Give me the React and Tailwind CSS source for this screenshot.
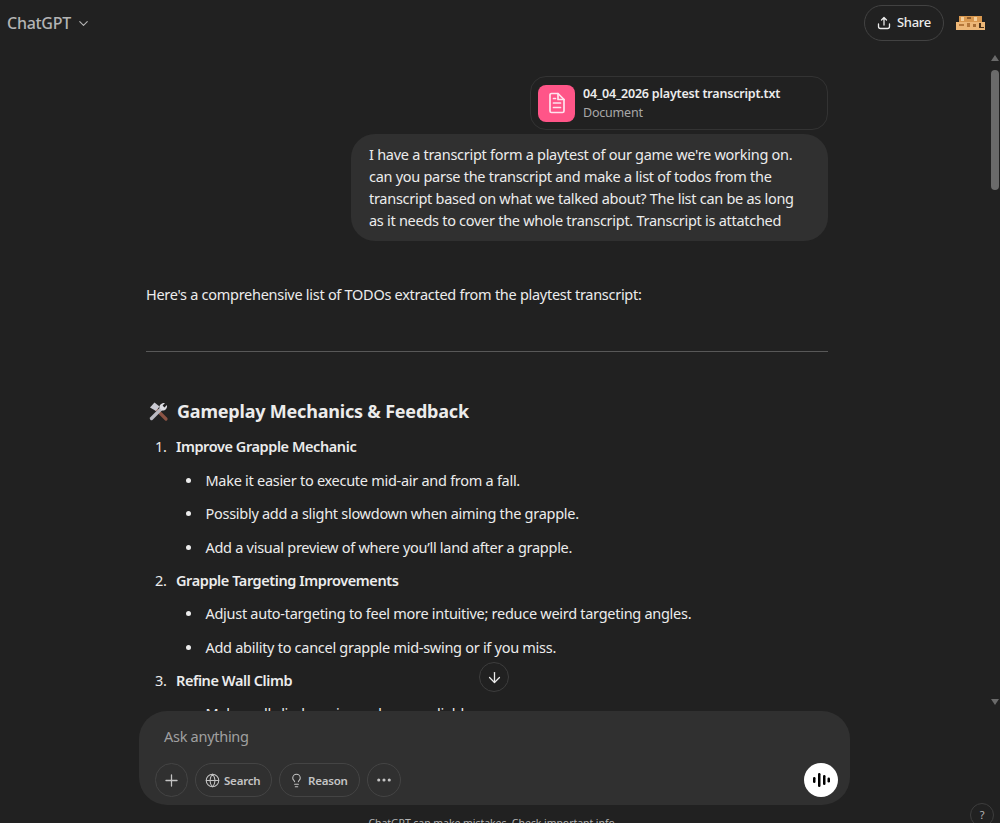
import React from 'react';
import { ChevronDown, Plus, Globe, Lightbulb, Ellipsis, ArrowDown } from 'lucide-react';

const sections = [
  {
    n: '1.',
    title: 'Improve Grapple Mechanic',
    items: [
      'Make it easier to execute mid-air and from a fall.',
      'Possibly add a slight slowdown when aiming the grapple.',
      'Add a visual preview of where you’ll land after a grapple.',
    ],
  },
  {
    n: '2.',
    title: 'Grapple Targeting Improvements',
    items: [
      'Adjust auto-targeting to feel more intuitive; reduce weird targeting angles.',
      'Add ability to cancel grapple mid-swing or if you miss.',
    ],
  },
  {
    n: '3.',
    title: 'Refine Wall Climb',
    items: ['Make wall climb easier and more reliable.'],
  },
];

function ToolsEmoji() {
  return (
    <svg width="21" height="21" viewBox="0 0 21 21" className="shrink-0 ml-[2px]">
      {/* hammer */}
      <path d="M8 8 L18 18" stroke="#8b5344" strokeWidth="3.2" strokeLinecap="round" />
      <path d="M2 6.5 L6.5 1.5 L11.5 5.5 L8 10 Z" fill="#c9c9d1" />
      {/* wrench */}
      <path d="M3.5 17.5 L13 8" stroke="#b9b9c1" strokeWidth="3.4" strokeLinecap="round" />
      <path d="M11.5 7 C11 4 13.5 1.5 17 2 L14.6 4.6 L16.4 6.4 L19 4 C19.5 7.5 17 10 14 9.5 Z" fill="#dcdce2" />
    </svg>
  );
}

function Avatar() {
  return (
    <svg width="29" height="14" viewBox="0 0 29 14">
      <rect x="3" y="0" width="23" height="6" fill="#d9984f" />
      <rect x="0" y="6" width="29" height="8" fill="#edb777" />
      <rect x="5" y="1" width="3" height="4" fill="#f4cf9c" />
      <rect x="11" y="1" width="4" height="2" fill="#8f5d2d" />
      <rect x="18" y="1" width="3" height="4" fill="#f4cf9c" />
      <rect x="3" y="8" width="5" height="2" fill="#b5773a" />
      <rect x="11" y="7" width="3" height="4" fill="#b5773a" />
      <rect x="17" y="8" width="3" height="3" fill="#a66c34" />
      <rect x="23" y="7" width="2" height="4" fill="#4a3118" />
      <rect x="23" y="11" width="5" height="1" fill="#4a3118" />
    </svg>
  );
}

function Pill({ icon: Icon, label, width }) {
  return (
    <div className={`h-[34px] ${width} pl-[9px] flex items-center gap-[4px] rounded-full border border-[#444444] text-[#c4c4c4] text-[11.5px] font-semibold tracking-[-0.2px]`}>
      <Icon size={15} strokeWidth={1.7} />
      <span className="mt-px">{label}</span>
    </div>
  );
}

export default function App() {
  return (
    <div className="relative w-[1000px] h-[823px] overflow-hidden bg-[#212121] text-[#ececec] text-[14.5px] tracking-[-0.28px] font-['Noto_Sans','Open_Sans',sans-serif]">
      <header className="h-[46px] flex items-center justify-between pl-[7px] pr-[15px]">
        <div className="flex items-center gap-[5px] text-[#b4b4b4] text-[16px] font-medium">
          ChatGPT
          <ChevronDown size={15} strokeWidth={1.8} />
        </div>
        <div className="flex items-center gap-3">
          <div className="h-9 w-[80px] rounded-full border border-[#424242] flex items-center justify-center gap-[6px] text-[13px] font-medium">
            <svg width="14" height="14" viewBox="0 0 14 14" fill="none" stroke="currentColor" strokeWidth="1.3" strokeLinecap="round" strokeLinejoin="round">
              <path d="M7 9V1.5M4.5 4L7 1.5 9.5 4" />
              <path d="M1.5 8v2.5a2 2 0 0 0 2 2h7a2 2 0 0 0 2-2V8" />
            </svg>
            Share
          </div>
          <Avatar />
        </div>
      </header>

      <main className="w-[682px] ml-[146px] pt-[30px]">
        <div className="flex flex-col items-end">
          <div className="w-[298px] h-[54px] rounded-2xl border border-[#333333] flex items-center gap-[8px] pl-[7px]">
            <div className="w-[37px] h-[37px] rounded-lg bg-[#ff5588] flex items-center justify-center">
              <svg width="20" height="22" viewBox="0 0 20 22" fill="none" stroke="#ffe4ee" strokeWidth="1.7" strokeLinejoin="round" strokeLinecap="round">
                <path d="M3 3a1.5 1.5 0 0 1 1.5-1.5H11L17 7.5V19a1.5 1.5 0 0 1-1.5 1.5h-11A1.5 1.5 0 0 1 3 19Z" />
                <path d="M11 1.5V7.5H17" />
                <path d="M6.5 6.5H8.5M6.5 11H13.5M6.5 15.5H13.5" />
              </svg>
            </div>
            <div className="leading-[19px] text-[12.5px] tracking-[-0.2px]">
              <div className="font-semibold">04_04_2026 playtest transcript.txt</div>
              <div className="text-[#a8a8a8]">Document</div>
            </div>
          </div>
          <div className="w-[477px] mt-1 rounded-3xl bg-[#303030] px-[18px] pt-[9px] pb-[10px] leading-[22px]">
            I have a transcript form a playtest of our game we're working on. can you parse the transcript and make a list of todos from the transcript based on what we talked about? The list can be as long as it needs to cover the whole transcript. Transcript is attatched
          </div>
        </div>

        <p className="mt-[42px] leading-[22px]">Here's a comprehensive list of TODOs extracted from the playtest transcript:</p>
        <hr className="mt-[46px] border-[#585858]" />

        <h3 className="mt-[46px] flex items-center gap-2 text-[18px] font-bold tracking-[-0.2px] leading-[27px]">
          <ToolsEmoji />
          Gameplay Mechanics &amp; Feedback
        </h3>

        {sections.map((s, i) => (
          <div key={s.n}>
            <div className={`flex leading-[22px] ${i === 0 ? 'mt-[10px]' : 'mt-[11px]'}`}>
              <span className="w-[30px] pl-[9px] shrink-0">{s.n}</span>
              <span className="font-semibold tracking-[-0.42px]">{s.title}</span>
            </div>
            {s.items.map(item => (
              <div key={item} className="flex mt-[11.5px] leading-[22px]">
                <span className="w-[59.5px] shrink-0 flex justify-end pr-[15px] pt-[9px]">
                  <span className="w-[5px] h-[5px] rounded-full bg-[#ececec]" />
                </span>
                <span>{item}</span>
              </div>
            ))}
          </div>
        ))}
      </main>

      {/* scroll to bottom */}
      <div className="absolute left-[479px] top-[662px] w-[30px] h-[30px] rounded-full border border-[#3d3d3d] bg-[#212121] flex items-center justify-center">
        <ArrowDown size={17} strokeWidth={1.8} />
      </div>

      {/* scrollbar */}
      <div className="absolute right-0 top-[55px] w-[11px] h-[650px] flex flex-col items-center justify-between">
        <div className="w-0 h-0 border-x-[4px] border-x-transparent border-b-[6px] border-b-[#6a6a6a]" />
        <div className="absolute top-[15px] left-[2px] w-2 h-[120px] rounded-full bg-[#6a6a6a]" />
        <div className="w-0 h-0 border-x-[4px] border-x-transparent border-t-[6px] border-t-[#6a6a6a]" />
      </div>

      {/* composer */}
      <div className="absolute left-0 right-0 top-[711px] bottom-0 bg-[#212121]">
        <div className="ml-[139px] w-[711px] h-[94px] rounded-[28px] bg-[#303030]">
          <div className="pl-[25px] pt-[14px] leading-[22px] text-[#a0a0a0]">Ask anything</div>
          <div className="flex items-center justify-between pl-4 pr-[12px] mt-[16px]">
            <div className="flex items-center gap-[7px]">
              <div className="w-[33px] h-[34px] rounded-full border border-[#444444] flex items-center justify-center text-[#c4c4c4]">
                <Plus size={19} strokeWidth={1.6} />
              </div>
              <Pill icon={Globe} label="Search" width="w-[77px]" />
              <Pill icon={Lightbulb} label="Reason" width="w-[81px]" />
              <div className="w-[34px] h-[34px] rounded-full border border-[#444444] flex items-center justify-center text-[#c4c4c4]">
                <Ellipsis size={18} strokeWidth={2.2} />
              </div>
            </div>
            <div className="w-[34px] h-[34px] rounded-full bg-white flex items-center justify-center">
              <svg width="18" height="16" viewBox="0 0 18 16" fill="#000">
                <rect x="1" y="5" width="2.5" height="6" rx="1.2" />
                <rect x="6" y="1" width="2.5" height="14" rx="1.2" />
                <rect x="11" y="3" width="2.5" height="10" rx="1.2" />
                <rect x="15.5" y="5.5" width="2.5" height="5" rx="1.2" />
              </svg>
            </div>
          </div>
        </div>
        <div className="mt-[10px] text-center text-[10.5px] tracking-[-0.05px] leading-4 text-[#b4b4b4] w-[986px]">ChatGPT can make mistakes. Check important info.</div>
      </div>

      <div className="absolute left-[970px] top-[803px] w-6 h-6 rounded-full border border-[#3d3d3d] flex items-center justify-center text-[11px] text-[#b4b4b4]">?</div>
    </div>
  );
}
